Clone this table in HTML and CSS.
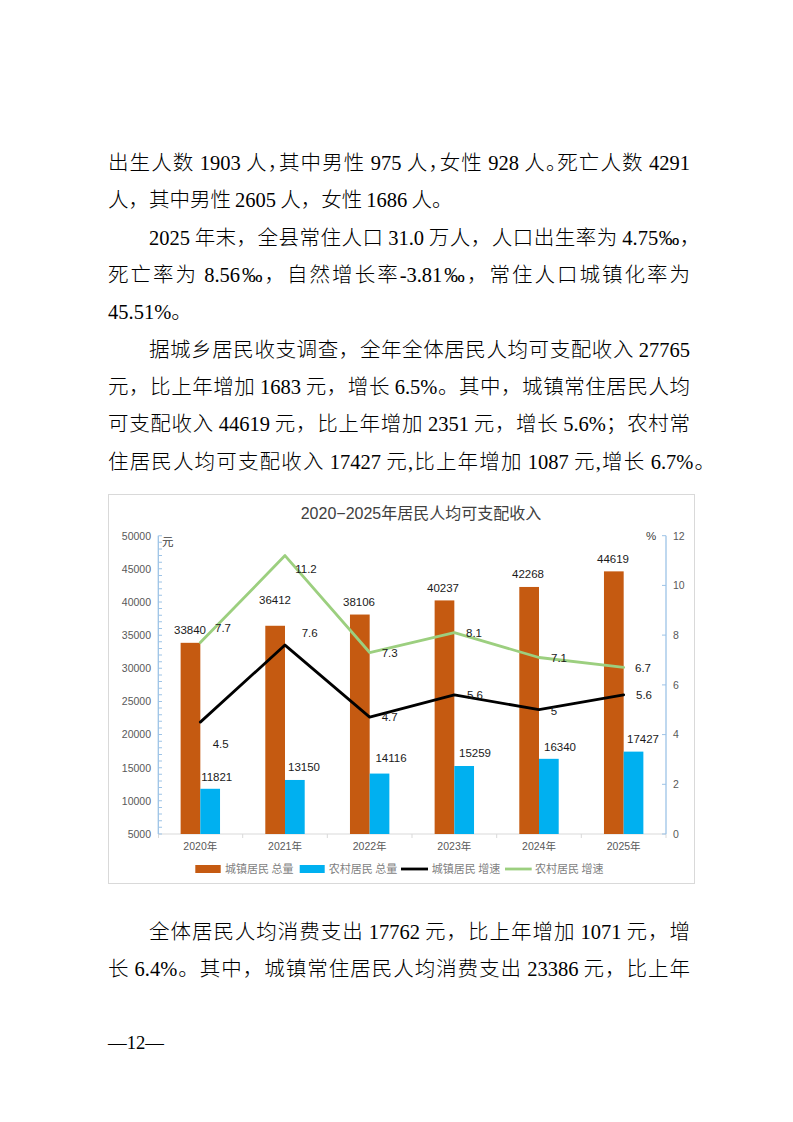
FILE: index.html
```html
<!DOCTYPE html>
<html lang="zh-CN">
<head>
<meta charset="utf-8">
<title>12</title>
<link rel="stylesheet" href="styles.css">
</head>
<body>
<div class="page">
  <div class="doc">
    <p class="para">
      <span class="ln">出生人数 1903 人<span class="h">，</span>其中男性 975 人<span class="h">，</span>女性 928 人<span class="h">。</span>死亡人数 4291</span>
      <span class="ln last">人，其中男性 2605 人，女性 1686 人。</span>
    </p>
    <p class="para">
      <span class="ln ind">2025 年末，全县常住人口 31.0 万人，人口出生率为 4.75‰<span class="h">，</span></span>
      <span class="ln">死亡率为 8.56‰，自然增长率-3.81‰，常住人口城镇化率为</span>
      <span class="ln last">45.51%。</span>
    </p>
    <p class="para">
      <span class="ln ind">据城乡居民收支调查，全年全体居民人均可支配收入 27765</span>
      <span class="ln">元，比上年增加 1683 元，增长 6.5%。其中，城镇常住居民人均</span>
      <span class="ln">可支配收入 44619 元，比上年增加 2351 元，增长 5.6%；农村常</span>
      <span class="ln wide">住居民人均可支配收入 17427 元,比上年增加 1087 元,增长 6.7%。</span>
    </p>
  </div>

  <figure class="chart">
    <svg class="chart-svg" width="587" height="390" viewBox="108 494 587 390" xmlns="http://www.w3.org/2000/svg">
      <rect x="108.5" y="494.5" width="586" height="389" fill="#fff" stroke="#d9d9d9" stroke-width="1"/>
      <text class="title" x="300.7" y="518.5">2020−2025年居民人均可支配收入</text>

      <!-- x axis -->
      <path d="M158 834H666" stroke="#d9d9d9" stroke-width="1"/>
      <path d="M158.5 834v4M242.7 834v4M327.3 834v4M412 834v4M496.7 834v4M581.3 834v4M666 834v4" stroke="#d9d9d9" stroke-width="1"/>

      <!-- left axis -->
      <path d="M158.3 535.7V834" stroke="#9dc3e6" stroke-width="1.3"/>
      <path d="M160.2 834.5V535.2" stroke="#9dc3e6" stroke-width="3.6" stroke-dasharray="1 5.629"/>

      <!-- right axis -->
      <path d="M666 535.7V834" stroke="#9dc3e6" stroke-width="1.3"/>
      <path d="M662 535.7H666M662 585.4H666M662 635.1H666M662 684.9H666M662 734.6H666M662 784.3H666M662 834H666" stroke="#9dc3e6" stroke-width="1"/>

      <!-- axis labels -->
      <g class="axl" text-anchor="end">
        <text x="151" y="539.5">50000</text>
        <text x="151" y="572.7">45000</text>
        <text x="151" y="605.8">40000</text>
        <text x="151" y="638.9">35000</text>
        <text x="151" y="672.1">30000</text>
        <text x="151" y="705.2">25000</text>
        <text x="151" y="738.4">20000</text>
        <text x="151" y="771.5">15000</text>
        <text x="151" y="804.7">10000</text>
        <text x="151" y="837.8">5000</text>
      </g>
      <g class="axl">
        <text x="673" y="539.5">12</text>
        <text x="673" y="589.2">10</text>
        <text x="673" y="638.9">8</text>
        <text x="673" y="688.7">6</text>
        <text x="673" y="738.4">4</text>
        <text x="673" y="788.1">2</text>
        <text x="673" y="837.8">0</text>
      </g>
      <text class="unit" x="162" y="546">元</text>
      <text class="unit" x="646" y="539.8">%</text>

      <!-- bars -->
      <g fill="#c55a11">
        <rect x="180.63" y="642.82" width="19.7" height="191.18"/>
        <rect x="265.3" y="625.77" width="19.7" height="208.23"/>
        <rect x="349.97" y="614.54" width="19.7" height="219.46"/>
        <rect x="434.63" y="600.42" width="19.7" height="233.58"/>
        <rect x="519.3" y="586.96" width="19.7" height="247.04"/>
        <rect x="603.97" y="571.37" width="19.7" height="262.63"/>
      </g>
      <g fill="#00b0f0">
        <rect x="200.33" y="788.78" width="19.7" height="45.22"/>
        <rect x="285" y="779.97" width="19.7" height="54.03"/>
        <rect x="369.67" y="773.57" width="19.7" height="60.43"/>
        <rect x="454.33" y="766" width="19.7" height="68"/>
        <rect x="539" y="758.83" width="19.7" height="75.17"/>
        <rect x="623.67" y="751.62" width="19.7" height="82.38"/>
      </g>

      <!-- lines -->
      <polyline points="200.33,642.59 285,555.59 369.67,652.54 454.33,632.65 539,657.51 623.67,667.45" fill="none" stroke="#9ccf7f" stroke-width="2.8" stroke-linejoin="round" stroke-linecap="round"/>
      <polyline points="200.33,722.14 285,645.08 369.67,717.17 454.33,694.8 539,709.71 623.67,694.8" fill="none" stroke="#000" stroke-width="2.8" stroke-linejoin="round" stroke-linecap="round"/>

      <!-- data labels -->
      <g class="dl" text-anchor="middle">
        <text x="190" y="634">33840</text>
        <text x="275" y="604">36412</text>
        <text x="359" y="606">38106</text>
        <text x="443" y="592">40237</text>
        <text x="528" y="578">42268</text>
        <text x="613" y="563">44619</text>

        <text x="216.7" y="780.7">11821</text>
        <text x="304" y="770.7">13150</text>
        <text x="391" y="761.7">14116</text>
        <text x="475" y="757">15259</text>
        <text x="560" y="750.7">16340</text>
        <text x="643" y="743">17427</text>

        <text x="223" y="631.7">7.7</text>
        <text x="306" y="573">11.2</text>
        <text x="389.7" y="657">7.3</text>
        <text x="474" y="637">8.1</text>
        <text x="559" y="662">7.1</text>
        <text x="643" y="672">6.7</text>

        <text x="220.7" y="748">4.5</text>
        <text x="309.7" y="636.7">7.6</text>
        <text x="389.7" y="721">4.7</text>
        <text x="475" y="699">5.6</text>
        <text x="554" y="714.7">5</text>
        <text x="644" y="699">5.6</text>
      </g>

      <!-- x labels -->
      <g class="axl" text-anchor="middle">
        <text x="200.3" y="849.7">2020年</text>
        <text x="285" y="849.7">2021年</text>
        <text x="369.7" y="849.7">2022年</text>
        <text x="454.3" y="849.7">2023年</text>
        <text x="539" y="849.7">2024年</text>
        <text x="623.7" y="849.7">2025年</text>
      </g>

      <!-- legend -->
      <rect x="195.3" y="865" width="25.4" height="8" fill="#c55a11"/>
      <text class="lg" x="225" y="872.8">城镇居民 总量</text>
      <rect x="299.7" y="865" width="25" height="8" fill="#00b0f0"/>
      <text class="lg" x="328.7" y="872.8">农村居民 总量</text>
      <path d="M401 869H428" stroke="#000" stroke-width="2.8"/>
      <text class="lg" x="431.7" y="872.8">城镇居民 增速</text>
      <path d="M505 869H531.7" stroke="#9ccf7f" stroke-width="2.8"/>
      <text class="lg" x="535" y="872.8">农村居民 增速</text>
    </svg>
  </figure>

  <div class="doc after">
    <p class="para">
      <span class="ln ind">全体居民人均消费支出 17762 元，比上年增加 1071 元，增</span>
      <span class="ln">长 6.4%。其中，城镇常住居民人均消费支出 23386 元，比上年</span>
    </p>
  </div>

  <div class="pageno">—12—</div>
</div>
</body>
</html>
```

FILE: styles.css
```css
* {
  box-sizing: border-box;
}

html, body {
  margin: 0;
  padding: 0;
  background: #ffffff;
}

.page {
  width: 793px;
  min-height: 1122px;
  padding: 145px 0 0 108px;
}

.doc {
  width: 582px;
  font-family: "Liberation Serif", "Noto Sans CJK SC", serif;
  font-size: 20.5px;
  font-weight: 300;
  line-height: 37.33px;
  color: #000000;
  word-spacing: -1px;
}

.para {
  margin: 0;
}

.ln {
  display: block;
  height: 37.33px;
  white-space: nowrap;
  text-align: justify;
  text-align-last: justify;
}

.ln.last {
  text-align-last: left;
}

.ln.ind {
  text-indent: 2em;
}

.ln.wide {
  margin-right: -25px;
}

.h {
  font-feature-settings: "halt";
}

.chart {
  margin: 13px 0 0 0;
  width: 587px;
  height: 390px;
}

.chart-svg {
  display: block;
}

.title {
  font-family: "Liberation Sans", "Noto Sans CJK SC", sans-serif;
  font-size: 16px;
  fill: #404040;
}

.axl {
  font-family: "Liberation Sans", "Noto Sans CJK SC", sans-serif;
  font-size: 10.5px;
  fill: #595959;
}

.unit {
  font-family: "Liberation Sans", "Noto Sans CJK SC", sans-serif;
  font-size: 11.5px;
  fill: #404040;
}

.dl {
  font-family: "Liberation Sans", "Noto Sans CJK SC", sans-serif;
  font-size: 11.5px;
  fill: #1a1a1a;
}

.lg {
  font-family: "Noto Sans CJK SC", "Liberation Sans", sans-serif;
  font-size: 11px;
  fill: #7f7f7f;
}

.after {
  margin-top: 30px;
}

.pageno {
  margin-top: 42px;
  font-family: "Liberation Serif", serif;
  font-size: 18.67px;
  line-height: 24px;
  color: #000000;
}
```
